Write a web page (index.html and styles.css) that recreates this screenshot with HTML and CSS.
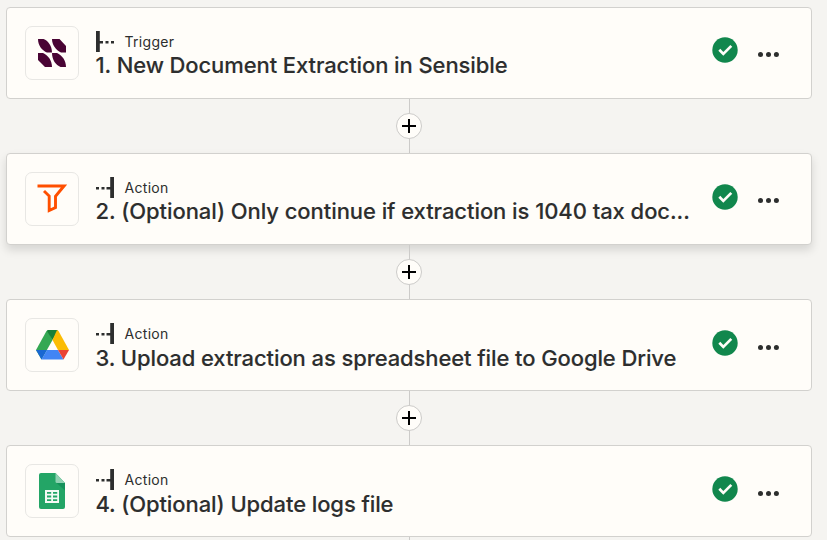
FILE: index.html
```
<!DOCTYPE html>
<html lang="en">
<head>
<meta charset="utf-8">
<title>Workflow</title>
<link rel="stylesheet" href="styles.css">
</head>
<body>
<svg width="0" height="0" class="defs">
  <symbol id="check" viewBox="0 0 26 26"><circle cx="13" cy="13" r="12.7" fill="#11874d"/><path d="M7.300 12.800l4 4.100 8-8" fill="none" stroke="#fffdf9" stroke-width="2.700"/></symbol>
  <symbol id="dots" viewBox="0 0 22 7"><g fill="#2d2e2e"><circle cx="3.500" cy="3.500" r="2.500"/><circle cx="11.500" cy="3.500" r="2.500"/><circle cx="19.400" cy="3.500" r="2.500"/></g></symbol>
  <symbol id="action" viewBox="0 0 18 22"><path d="M0 10h3v2.600H0zM5.500 10h3v2.600h-3zM10.500 10h4v2.600h-4zM14.200 0H18v21h-3.800z" fill="#2d2e2e"/></symbol>
  <symbol id="trigger" viewBox="0 0 18 22"><path d="M0 0h3.800v21H0zM3.500 10H7v2.600H3.500zM9.500 10h3v2.600h-3zM15 10h3v2.600h-3z" fill="#2d2e2e"/></symbol>
  <symbol id="plus" viewBox="0 0 14 14"><path d="M0 7h14M7 0v14" stroke="#000" stroke-width="2"/></symbol>
</svg>
<main class="flow">
  <section class="card first">
    <div class="app"><svg width="28" height="28" viewBox="0 0 28 28"><path d="M0 0h5.500C10 1.500 14 7 14 13.500H9C4.500 11.500 0 7 0 0zM14 0h7.500L28 7v6.500h-5C18 11 14 6 14 0zM0 14h5c5 2.500 9 7 9 14H7L0 21zM14 14h5c5 2.500 9 7 9 14h-5.500C18 26 14 21 14 14z" fill="#490434"/></svg></div>
    <div class="info"><div class="kind"><svg width="18" height="22"><use href="#trigger"/></svg><span>Trigger</span></div><h2>1. New Document Extraction in Sensible</h2></div>
    <svg class="check" width="26" height="26"><use href="#check"/></svg><svg class="dots" width="22" height="7"><use href="#dots"/></svg>
  </section>
  <div class="link"><span class="add"><svg width="14" height="14"><use href="#plus"/></svg></span></div>
  <section class="card raised">
    <div class="app"><svg width="30" height="30" viewBox="0 0 30 30"><path d="M.500 2h26.500L18.500 12.200v11.300l-6.300 3V12L7 7" fill="none" stroke="#ff4f00" stroke-width="2.900"/></svg></div>
    <div class="info"><div class="kind"><svg width="18" height="22"><use href="#action"/></svg><span>Action</span></div><h2>2. (Optional) Only continue if extraction is 1040 tax doc...</h2></div>
    <svg class="check" width="26" height="26"><use href="#check"/></svg><svg class="dots" width="22" height="7"><use href="#dots"/></svg>
  </section>
  <div class="link"><span class="add"><svg width="14" height="14"><use href="#plus"/></svg></span></div>
  <section class="card low">
    <div class="app"><svg width="33" height="30" viewBox="0 0 33 30"><path d="M12 0L10.500 1L0 20l5.500 9.500L16.500 10z" fill="#34a853"/><path d="M12 0h9l1 1-5.500 9L11 1z" fill="#188038"/><path d="M21 0l1.500 1L33 20H22L16.500 10z" fill="#fbbc04"/><path d="M0 20h11l-5.500 9.500z" fill="#1967d2"/><path d="M11 20h11l5.500 9.500h-22z" fill="#4285f4"/><path d="M22 20h11l-5.500 9.500z" fill="#ea4335"/></svg></div>
    <div class="info"><div class="kind"><svg width="18" height="22"><use href="#action"/></svg><span>Action</span></div><h2>3. Upload extraction as spreadsheet file to Google Drive</h2></div>
    <svg class="check" width="26" height="26"><use href="#check"/></svg><svg class="dots" width="22" height="7"><use href="#dots"/></svg>
  </section>
  <div class="link"><span class="add"><svg width="14" height="14"><use href="#plus"/></svg></span></div>
  <section class="card low">
    <div class="app"><svg width="26" height="36" viewBox="0 0 26 36"><path d="M2 0h14.500L26 10v24a2 2 0 0 1-2 2H2a2 2 0 0 1-2-2V2a2 2 0 0 1 2-2z" fill="#23a566"/><path d="M17 9.500l9 8V10z" fill="#15915a"/><path d="M16.500 0L26 10h-8a1.500 1.500 0 0 1-1.500-1.500z" fill="#8ed1b1"/><path d="M6 17h14v13H6z" fill="#f4faf4"/><path d="M8 19h4.200v1.800H8zM14 19h4.200v1.800H14zM8 22.600h4.200v1.800H8zM14 22.600h4.200v1.800H14zM8 26.200h4.200V28H8zM14 26.200h4.200V28H14z" fill="#23a566"/></svg></div>
    <div class="info"><div class="kind"><svg width="18" height="22"><use href="#action"/></svg><span>Action</span></div><h2>4. (Optional) Update logs file</h2></div>
    <svg class="check" width="26" height="26"><use href="#check"/></svg><svg class="dots" width="22" height="7"><use href="#dots"/></svg>
  </section>
  <div class="link end"></div>
</main>
</body>
</html>
```
FILE: styles.css
```
* { box-sizing: border-box; }
html, body { height: 100%; overflow: hidden; }
body { margin: 0; padding: 7px 0 0 6px; background: #f5f4f1; color: #2d2e2e; font-family: Inter, sans-serif; }
svg { display: block; flex: none; }
.defs { position: absolute; }
.flow { width: 806px; }
.card { height: 92px; display: flex; align-items: flex-start; padding: 18px 32px 0 18px; background: #fffdf9; border: 1px solid #d2d1ce; border-radius: 4px; }
.raised { box-shadow: 0 5px 10px rgba(0, 0, 0, .13); }
.app { width: 54px; height: 54px; flex: none; border: 1px solid #e8e7e4; border-radius: 7px; display: flex; align-items: center; justify-content: center; }
.info { flex: 1; min-width: 0; margin-left: 17px; padding-top: 5px; }
.kind { display: flex; height: 22px; align-items: center; gap: 10.5px; font-size: 14px; line-height: 22px; letter-spacing: .3px; }
h2 { margin: -1px 0 0 -.5px; font-size: 22px; line-height: 26px; font-weight: 500; letter-spacing: -.1px; white-space: nowrap; -webkit-text-stroke: .12px #2d2e2e; }
.raised h2 { letter-spacing: -.065px; }
.low h2 { padding-top: 1px; }
.check { margin: 12px 19px 0 0; }
.dots { margin-top: 26px; }
.first .check { margin-top: 11px; }
.first .dots, .raised .dots { margin-top: 25px; }
.link { height: 54px; display: flex; align-items: center; justify-content: center; background: linear-gradient(#cccbc9, #cccbc9) 403px 0 / 1px 100% no-repeat; }
.link.end { height: 3px; }
.add { width: 26px; height: 26px; border: 1px solid #cccbc9; border-radius: 50%; background: #fffdf9; display: flex; align-items: center; justify-content: center; }
```
